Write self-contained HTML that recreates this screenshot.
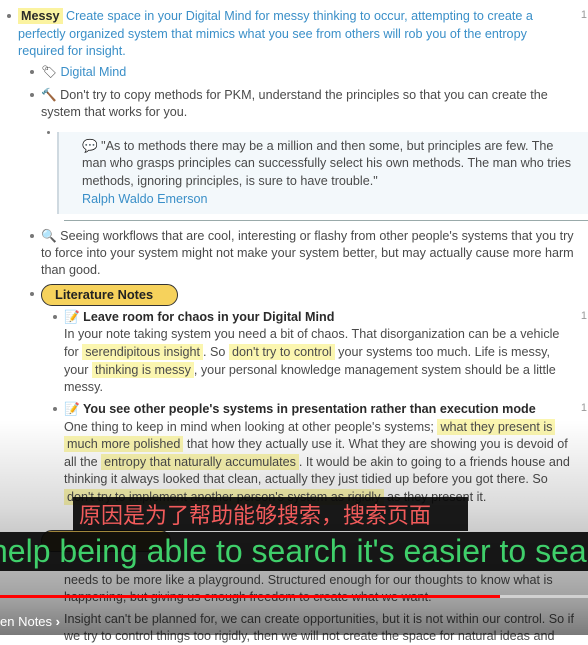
<!DOCTYPE html>
<html><head><meta charset="utf-8"><style>
*{margin:0;padding:0;box-sizing:border-box}
body{width:588px;height:635px;overflow:hidden;background:#fff;position:relative;font-family:"Liberation Sans",sans-serif;font-size:12.6px;color:#4a4a4a}
.l{position:absolute;white-space:nowrap;line-height:18px;height:18px}
.b{position:absolute;width:4px;height:4px;border-radius:50%;background:#777}
.blue{color:#3a8fc8}
.hl{background:#fbf6b0;padding:1px 3px}
.bold{font-weight:bold;color:#2a2a2a}
.num{position:absolute;right:0;color:#999;font-size:11px}
</style></head><body>
<div class="b" style="left:7px;top:14px"></div>
<div class="l" style="left:18px;top:7px"><span class="hl bold" style="background:#fbf3a0">Messy</span> <span class="blue">Create space in your Digital Mind for messy thinking to occur, attempting to create a</span></div>
<div class="num" style="top:9px;right:1px">1</div>
<div class="l blue" style="left:18px;top:25px">perfectly organized system that mimics what you see from others will rob you of the entropy</div>
<div class="l blue" style="left:18px;top:42px">required for insight.</div>

<div class="b" style="left:30px;top:70px"></div>
<div class="l" style="left:41px;top:63px">🏷 <span class="blue">Digital Mind</span></div>
<div class="b" style="left:30px;top:93px"></div>
<div class="l" style="left:41px;top:86px">🔨 Don't try to copy methods for PKM, understand the principles so that you can create the</div>
<div class="l" style="left:41px;top:103px">system that works for you.</div>

<div class="b" style="left:47px;top:131px;width:3px;height:3px"></div>
<div style="position:absolute;left:57px;top:132px;width:531px;height:82px;background:#f3f8fb;border-left:2px solid #cfd9e0"></div>
<div style="position:absolute;left:64px;top:220px;width:524px;height:1px;background:#9aa"></div>
<div class="l" style="left:82px;top:137px">💬 "As to methods there may be a million and then some, but principles are few. The</div>
<div class="l" style="left:82px;top:154px">man who grasps principles can successfully select his own methods. The man who tries</div>
<div class="l" style="left:82px;top:172px">methods, ignoring principles, is sure to have trouble."</div>
<div class="l blue" style="left:82px;top:190px">Ralph Waldo Emerson</div>

<div class="b" style="left:30px;top:234px"></div>
<div class="l" style="left:41px;top:227px">🔍 Seeing workflows that are cool, interesting or flashy from other people's systems that you try</div>
<div class="l" style="left:41px;top:244px">to force into your system might not make your system better, but may actually cause more harm</div>
<div class="l" style="left:41px;top:261px">than good.</div>

<div class="b" style="left:30px;top:292px"></div>
<div style="position:absolute;left:41px;top:284px;width:137px;height:22px;border:1.5px solid #333;border-radius:12px;background:#f6d25c;font-weight:bold;font-size:12.8px;color:#222;line-height:19px;padding-left:13px">Literature Notes</div>

<div class="b" style="left:53px;top:315px"></div>
<div class="l bold" style="left:64px;top:308px">📝 Leave room for chaos in your Digital Mind</div>
<div class="num" style="top:310px;right:1px">1</div>
<div class="l" style="left:64px;top:325px">In your note taking system you need a bit of chaos. That disorganization can be a vehicle</div>
<div class="l" style="left:64px;top:343px">for <span class="hl">serendipitous insight</span>. So <span class="hl">don't try to control</span> your systems too much. Life is messy,</div>
<div class="l" style="left:64px;top:361px">your <span class="hl">thinking is messy</span>, your personal knowledge management system should be a little</div>
<div class="l" style="left:64px;top:378px">messy.</div>

<div class="b" style="left:53px;top:407px"></div>
<div class="l bold" style="left:64px;top:400px">📝 You see other people's systems in presentation rather than execution mode</div>
<div class="num" style="top:402px;right:1px">1</div>
<div class="l" style="left:64px;top:418px">One thing to keep in mind when looking at other people's systems; <span class="hl">what they present is</span></div>
<div class="l" style="left:64px;top:435px"><span class="hl">much more polished</span> that how they actually use it. What they are showing you is devoid of</div>
<div class="l" style="left:64px;top:453px">all the <span class="hl">entropy that naturally accumulates</span>. It would be akin to going to a friends house and</div>
<div class="l" style="left:64px;top:470px">thinking it always looked that clean, actually they just tidied up before you got there. So</div>
<div class="l" style="left:64px;top:488px"><span class="hl">don't try to implement another person's system as rigidly</span> as they present it.</div>
<div style="position:absolute;left:41px;top:530px;width:130px;height:22px;border:1.5px solid #333;border-radius:12px;background:#c9a84a"></div>
<div class="l" style="left:64px;top:571px">needs to be more like a playground. Structured enough for our thoughts to know what is</div>
<div class="l" style="left:64px;top:588px">happening, but giving us enough freedom to create what we want.</div>
<div class="l" style="left:64px;top:610px">Insight can't be planned for, we can create opportunities, but it is not within our control. So if</div>
<div class="l" style="left:64px;top:627px">we try to control things too rigidly, then we will not create the space for natural ideas and</div>

<div style="position:absolute;left:0;top:420px;width:588px;height:215px;background:linear-gradient(to bottom,rgba(0,0,0,0),rgba(0,0,0,0.14) 40%,rgba(0,0,0,0.38) 85%,rgba(0,0,0,0.52))"></div>

<div style="position:absolute;left:73px;top:497px;width:395px;height:34px;background:rgba(8,8,8,0.92);color:#f25b5b;font-family:'Noto Sans CJK SC',sans-serif;font-size:22px;line-height:34px;padding-left:6px;white-space:nowrap">原因是为了帮助能够搜索，搜索页面</div>
<div style="position:absolute;left:0;top:532px;width:588px;height:39px;background:rgba(8,8,8,0.92);color:#3fcf6a;font-size:32px;line-height:38px;white-space:nowrap;overflow:hidden"><span style="margin-left:-10px">help being able to search it's easier to sea</span></div>

<div style="position:absolute;left:0;top:595px;width:500px;height:3px;background:#f00"></div>
<div style="position:absolute;left:500px;top:595px;width:88px;height:3px;background:rgba(255,255,255,0.5)"></div>
<div class="l" style="left:0;top:613px;color:#fff;font-size:13px">en Notes <b>›</b></div>
</body></html>
